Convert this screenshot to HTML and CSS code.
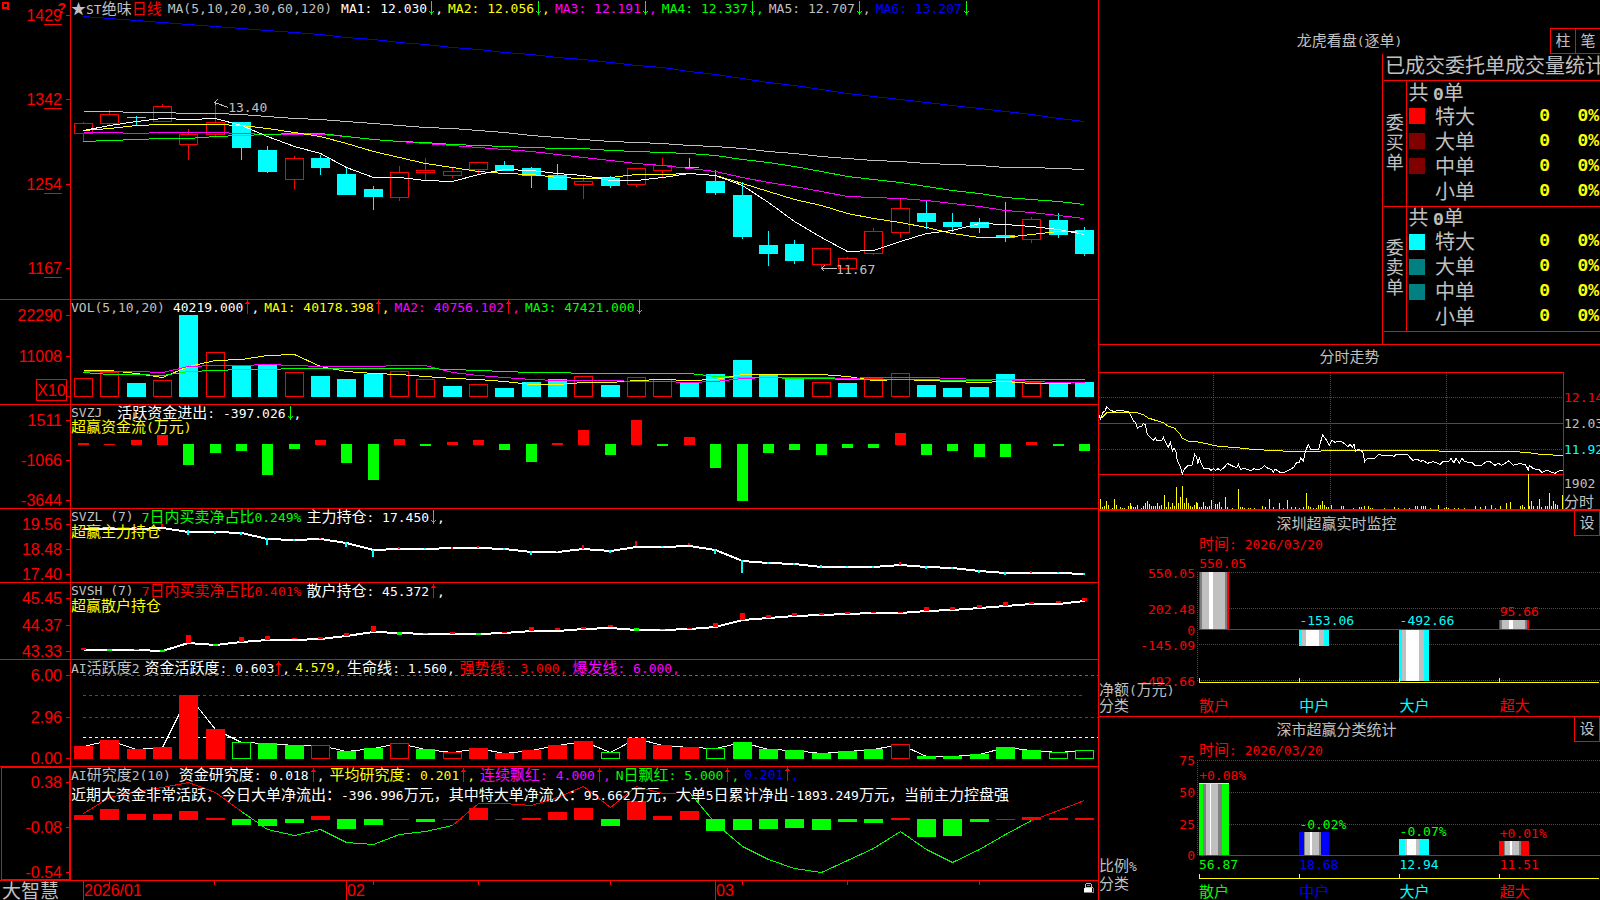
FILE: index.html
```html
<!DOCTYPE html>
<html lang="zh-CN">
<head>
<meta charset="utf-8">
<title>ST绝味 日线 - 大智慧</title>
<link rel="stylesheet" href="styles.css">
</head>
<body>
<svg class="defs" aria-hidden="true">
  <symbol id="down" viewBox="0 0 5 14"><path d="M2 0h1v14h-1zM0 10h1v1h3v-1h1v1h-1v1h-3v-1h-1zM1 11h3v1h-3z"/></symbol>
  <symbol id="up" viewBox="0 0 5 14"><path d="M2 0h1v14h-1zM1 2h3v1h-3zM0 3h5v1h-5z"/></symbol>
</svg>
<div class="app">
<main class="charts">
  <section class="panel price">
    <div class="axis">
      <svg class="corner" viewBox="0 0 8 8"><path d="M0 0h7v7h1v1h-3v-1h-5zM2 2v3h3v-3z" fill-rule="evenodd"/></svg>
      <b class="help">?</b>
      <span class="label">14<u>29</u></span><span class="label">13<u>42</u></span><span class="label">12<u>54</u></span><span class="label">11<u>67</u></span>
    </div>
    <div class="plot">
      <svg class="canvas" id="price" preserveAspectRatio="none"></svg>
      <div class="legend">
        <span class="title gray"><span class="z">★</span>ST<span class="z">绝味<span class="red">日线</span></span></span>
        <span class="params gray">MA(5,10,20,30,60,120)</span>
        <span class="white">MA1: 12.030<svg class="arrow dn"><use href="#down"/></svg>,</span>
        <span class="yellow">MA2: 12.056<svg class="arrow dn"><use href="#down"/></svg>,</span>
        <span class="magenta">MA3: 12.191<svg class="arrow dn"><use href="#down"/></svg>,</span>
        <span class="green">MA4: 12.337<svg class="arrow dn"><use href="#down"/></svg>,</span>
        <span class="gray">MA5: 12.707<svg class="arrow dn"><use href="#down"/></svg>,</span>
        <span class="blue">MA6: 13.207<svg class="arrow dn"><use href="#down"/></svg></span>
      </div>
      <span class="note high">13.40</span>
      <span class="note low">11.67</span>
    </div>
  </section>

  <section class="panel">
    <div class="axis">
      <span class="label">22290</span><span class="label">11008</span><span class="label"><span class="scale">X10</span></span>
    </div>
    <div class="plot">
      <svg class="canvas" id="volume" preserveAspectRatio="none"></svg>
      <div class="legend">
        <span class="params gray">VOL(5,10,20)</span>
        <span class="white">40219.000<svg class="arrow"><use href="#up"/></svg>,</span>
        <span class="yellow">MA1: 40178.398<svg class="arrow"><use href="#up"/></svg>,</span>
        <span class="magenta">MA2: 40756.102<svg class="arrow"><use href="#up"/></svg>,</span>
        <span class="green">MA3: 47421.000<svg class="arrow dn"><use href="#down"/></svg></span>
      </div>
    </div>
  </section>

  <section class="panel">
    <div class="axis">
      <span class="label">1511</span><span class="label">-1066</span><span class="label">-3644</span>
    </div>
    <div class="plot">
      <svg class="canvas" id="flow" preserveAspectRatio="none"></svg>
      <div class="legend">
        <span class="params wide gray">SVZJ</span>
        <span class="white"><span class="z">活跃资金进出</span>: -397.026<svg class="arrow dn"><use href="#down"/></svg>,</span>
      </div>
      <div class="legend name"><span class="yellow"><span class="z">超赢资金流</span>(<span class="z">万元</span>)</span></div>
    </div>
  </section>

  <section class="panel">
    <div class="axis">
      <span class="label">19.56</span><span class="label">18.48</span><span class="label">17.40</span>
    </div>
    <div class="plot">
      <svg class="canvas" id="major" preserveAspectRatio="none"></svg>
      <div class="legend">
        <span class="params gray">SVZL (7)</span>
        <span class="green">7<span class="z">日内买卖净占比</span>0.249%</span>
        <span class="white"><span class="z">主力持仓</span>: 17.450<svg class="arrow dn"><use href="#down"/></svg>,</span>
      </div>
      <div class="legend name"><span class="yellow z">超赢主力持仓</span></div>
    </div>
  </section>

  <section class="panel">
    <div class="axis">
      <span class="label">45.45</span><span class="label">44.37</span><span class="label">43.33</span>
    </div>
    <div class="plot">
      <svg class="canvas" id="retail" preserveAspectRatio="none"></svg>
      <div class="legend">
        <span class="params gray">SVSH (7)</span>
        <span class="red">7<span class="z">日内买卖净占比</span>0.401%</span>
        <span class="white"><span class="z">散户持仓</span>: 45.372<svg class="arrow"><use href="#up"/></svg>,</span>
      </div>
      <div class="legend name"><span class="yellow z">超赢散户持仓</span></div>
    </div>
  </section>

  <section class="panel">
    <div class="axis">
      <span class="label">6.00</span><span class="label">2.96</span><span class="label">0.00</span>
    </div>
    <div class="plot">
      <svg class="canvas" id="active" preserveAspectRatio="none"></svg>
      <div class="legend">
        <span class="gray">AI<span class="z">活跃度</span>2</span>
        <span class="white"><span class="z">资金活跃度</span>: 0.603<svg class="arrow"><use href="#up"/></svg>,</span>
        <span class="yellow">4.579,</span>
        <span class="white"><span class="z">生命线</span>: 1.560,</span>
        <span class="red"><span class="z">强势线</span>: 3.000,</span>
        <span class="magenta"><span class="z">爆发线</span>: 6.000,</span>
      </div>
    </div>
  </section>

  <section class="panel selected">
    <div class="axis">
      <span class="label">0.38</span><span class="label">-0.08</span><span class="label">-0.54</span>
    </div>
    <div class="plot">
      <svg class="canvas" id="research" preserveAspectRatio="none"></svg>
      <div class="legend">
        <span class="params gray">AI<span class="z">研究度</span>2(10)</span>
        <span class="white"><span class="z">资金研究度</span>: 0.018<svg class="arrow"><use href="#up"/></svg>,</span>
        <span class="yellow"><span class="z">平均研究度</span>: 0.201<svg class="arrow"><use href="#up"/></svg>,</span>
        <span class="magenta"><span class="z">连续飘红</span>: 4.000<svg class="arrow"><use href="#up"/></svg>,</span>
        <span class="green">N<span class="z">日飘红</span>: 5.000<svg class="arrow"><use href="#up"/></svg>,</span>
        <span class="blue">0.201<svg class="arrow"><use href="#up"/></svg>,</span>
      </div>
      <p class="legend summary white"><span><span class="z">近期大资金非常活跃，今日大单净流出：</span>-396.996<span class="z">万元，其中特大单净流入：</span>95.662<span class="z">万元，大单</span>5<span class="z">日累计净出</span>-1893.249<span class="z">万元，当前主力控盘强</span></span></p>
    </div>
  </section>

  <footer class="timeline">
    <strong class="brand">大智慧</strong>
    <div class="months">
      <svg class="canvas" id="ticks" preserveAspectRatio="none"></svg>
      <span class="month">2026/01</span><span class="month">02</span><span class="month">03</span>
      <svg class="lock" viewBox="0 0 11 12"><path d="M2 1h5v1h1v3h-1v-3h-5v3h-1v-3h1z" fill="#c0c0c0"/><path d="M3 3h3v1h-3z" fill="#808080"/><path d="M1 5h8v1h-8z" fill="#c0c0c0"/><path d="M0 6h8v4h-8z" fill="#fff"/><path d="M9 6h1v5h-10v-1h9z" fill="#808080"/></svg>
    </div>
  </footer>
</main>

<aside class="side">
  <section class="orders">
    <div class="orders-head">
      <h2><span class="z">龙虎看盘</span>(<span class="z">逐单</span>)</h2>
      <div class="modes"><button type="button">柱</button><button type="button">笔</button></div>
    </div>
    <div class="orders-body">
      <table class="stats">
        <caption>已成交委托单成交量统计</caption>
        <colgroup><col class="c-kind"><col class="c-key"><col class="c-label"><col class="c-count"><col></colgroup>
        <tbody>
          <tr><th class="kind" rowspan="5">委<br>买<br>单</th><td class="total" colspan="4">共 <b>0</b>单</td></tr>
          <tr><td class="key"><i class="swatch s-red"></i></td><th>特大</th><td class="num">0</td><td class="num">0%</td></tr>
          <tr><td class="key"><i class="swatch s-maroon"></i></td><th>大单</th><td class="num">0</td><td class="num">0%</td></tr>
          <tr><td class="key"><i class="swatch s-maroon"></i></td><th>中单</th><td class="num">0</td><td class="num">0%</td></tr>
          <tr><td class="key"></td><th>小单</th><td class="num">0</td><td class="num">0%</td></tr>
        </tbody>
        <tbody>
          <tr><th class="kind" rowspan="5">委<br>卖<br>单</th><td class="total" colspan="4">共 <b>0</b>单</td></tr>
          <tr><td class="key"><i class="swatch s-cyan"></i></td><th>特大</th><td class="num">0</td><td class="num">0%</td></tr>
          <tr><td class="key"><i class="swatch s-teal"></i></td><th>大单</th><td class="num">0</td><td class="num">0%</td></tr>
          <tr><td class="key"><i class="swatch s-teal"></i></td><th>中单</th><td class="num">0</td><td class="num">0%</td></tr>
          <tr><td class="key"></td><th>小单</th><td class="num">0</td><td class="num">0%</td></tr>
        </tbody>
      </table>
    </div>
  </section>

  <section class="intraday">
    <h2 class="z">分时走势</h2>
    <div class="intraday-body">
      <div class="intraday-plot"><svg class="canvas" id="intraday" preserveAspectRatio="none"></svg></div>
      <div class="intraday-axis">
        <span class="red">12.14</span><span>12.03</span><span class="cyan">11.92</span><span class="count">1902</span><span class="z">分时</span>
      </div>
    </div>
  </section>

  <section class="monitor net">
    <div class="monitor-head"><h2 class="z">深圳超赢实时监控</h2><button type="button">设</button></div>
    <p class="time red"><span class="z">时间</span>: 2026/03/20</p>
    <div class="bars">
      <span class="tick y1">550.05</span><span class="tick y2">202.48</span><span class="tick y3">0</span><span class="tick y4">-145.09</span><span class="tick y5">-492.66</span>
      <svg class="canvas" id="net" preserveAspectRatio="none"></svg>
      <span class="value v1 red">550.05</span><span class="value v2 cyan">-153.06</span><span class="value v3 cyan">-492.66</span><span class="value v4 red">95.66</span>
      <span class="unit"><span class="z">净额</span>(<span class="z">万元</span>)</span>
    </div>
    <div class="groups z"><span>分类</span><span class="red">散户</span><span class="cyan">中户</span><span class="cyan">大户</span><span class="red">超大</span></div>
  </section>

  <section class="monitor share">
    <div class="monitor-head"><h2 class="z">深市超赢分类统计</h2><button type="button">设</button></div>
    <p class="time red"><span class="z">时间</span>: 2026/03/20</p>
    <div class="bars">
      <span class="tick y1">75</span><span class="tick y2">50</span><span class="tick y3">25</span><span class="tick y4">0</span>
      <svg class="canvas" id="share" preserveAspectRatio="none"></svg>
      <span class="value v1 red">+0.08%</span><span class="value v2 green">-0.02%</span><span class="value v3 green">-0.07%</span><span class="value v4 red">+0.01%</span>
    </div>
    <div class="groups ratio"><span><span class="z">比例</span>%</span><span class="green">56.87</span><span class="blue">18.68</span><span class="cyan">12.94</span><span class="red">11.51</span></div>
    <div class="groups z"><span class="raised">分类</span><span class="green">散户</span><span class="blue">中户</span><span class="cyan">大户</span><span class="red">超大</span></div>
  </section>
</aside>
</div>
<script src="charts.js"></script>
</body>
</html>
```
FILE: styles.css
```css
* { box-sizing: border-box; }

body {
  margin: 0;
  background: #000;
  color: #c0c0c0;
  font: 13px/15px "DejaVu Sans Mono", "Noto Sans CJK SC", monospace;
  overflow: hidden;
}

h2, p { margin: 0; font-weight: 400; }
h2 { font-size: 13px; }
.z { font-family: "Noto Sans CJK SC", sans-serif; font-size: 15px; line-height: 15px; }
.defs { display: none; }

.red { color: #f00; }
.green { color: #0f0; }
.blue { color: #00f; }
.cyan { color: #0ff; }
.yellow { color: #ff0; }
.magenta { color: #f0f; }
.white { color: #fff; }
.gray { color: #c0c0c0; }

button {
  background: #000;
  border: 1px solid #f00;
  color: #c0c0c0;
  font: 15px/20px "Noto Sans CJK SC", sans-serif;
  padding: 0 0 2px;
  width: 26px;
  height: 26px;
}

.app { display: flex; height: 100vh; min-height: 700px; }

/* Left: stacked indicator panels */
.charts {
  flex: 1;
  min-width: 0;
  border-right: 1px solid #f00;
  display: grid;
  grid-template-rows: 300fr 105fr 104fr 74fr 77fr 107fr 114fr 19fr;
}
.panel { display: flex; min-height: 0; border-bottom: 1px solid #f00; }
.axis {
  position: relative;
  width: 71px;
  flex: none;
  border-right: 1px solid #f00;
  padding: 7px 8px 0 0;
  display: flex;
  flex-direction: column;
  justify-content: space-between;
  align-items: flex-end;
  color: #f00;
  font: 16px/17px "Liberation Sans", sans-serif;
}
.label { position: relative; height: 16px; }
.label::after {
  content: "";
  position: absolute;
  right: -8px;
  top: 8px;
  width: 4px;
  height: 1px;
  background: #f00;
}
.label u { display: inline-block; height: 18px; text-decoration: none; border-bottom: 1px solid #f00; }
.price .axis { padding-bottom: 23px; }
.corner { position: absolute; left: 2px; top: 2px; width: 8px; height: 8px; fill: #f00; }
.help { position: absolute; right: 4px; top: 0; font-size: 14px; }
.scale {
  position: absolute;
  right: -5px;
  bottom: 3px;
  width: 31px;
  height: 22px;
  line-height: 21px;
  text-align: center;
  border: 1px solid #f00;
}
.selected .axis::before { content: ""; position: absolute; left: 1px; top: 0; right: 0; bottom: 0; border: 1px solid #f00; }

.plot { position: relative; flex: 1; min-width: 0; }
.canvas { position: absolute; left: 0; top: 0; width: 100%; height: 100%; shape-rendering: crispEdges; }
.legend { position: relative; display: flex; align-items: center; gap: 5px; height: 15px; white-space: nowrap; }
.price .legend { height: 17px; }
.params { margin-right: 3px; }
.price .params { margin-right: 4px; }
.title { margin-right: 1px; }
.wide { margin-right: 10px; }
.name { margin-top: -1px; }
.summary { margin-top: 4px; height: 17px; }
.arrow { width: 5px; height: 14px; margin: 0 1px 0 2px; vertical-align: -2px; fill: #f00; shape-rendering: crispEdges; }
.arrow.dn { fill: #0f0; }
.note { position: absolute; }
.high { left: 15.3%; top: 33.5%; }
.low { left: 74.5%; top: 87.5%; }

.timeline { display: flex; }
.brand { width: 83px; flex: none; padding-left: 2px; font: 400 19px/17px "Noto Sans CJK SC", sans-serif; }
.months { position: relative; flex: 1; display: grid; grid-template-columns: 263fr 369fr 383fr; }
.month { border-left: 1px solid #f00; color: #f00; font: 16px/19px "Liberation Sans", sans-serif; }
.lock { position: absolute; right: 3px; top: 1px; width: 11px; height: 12px; shape-rendering: crispEdges; }

/* Right: order statistics and monitors */
.side {
  width: 501px;
  flex: none;
  overflow: hidden;
  display: grid;
  grid-template-rows: 345fr 166fr 206fr 183fr;
}
.side > section { min-height: 0; min-width: 0; position: relative; }

.orders { border-bottom: 1px solid #f00; display: flex; flex-direction: column; }
.orders-head { position: relative; height: 54px; padding-top: 32px; text-align: center; }
.modes { position: absolute; right: -1px; top: 28px; display: flex; }
.modes button + button { margin-left: -1px; }
.orders-body { flex: 1; margin-left: 283px; border-left: 1px solid #f00; padding-left: 1px; overflow: hidden; }
.stats {
  width: 222px;
  table-layout: fixed;
  border-collapse: collapse;
  font: 20px/24px "Noto Sans CJK SC", sans-serif;
}
.c-kind { width: 22px; }
.c-key { width: 29px; }
.c-label { width: 38px; }
.c-count { width: 77px; }
.stats caption { height: 26px; line-height: 22px; text-align: left; white-space: nowrap; padding-left: 1px; }
.stats tbody { border-top: 1px solid #f00; border-bottom: 1px solid #f00; }
.stats tr { height: 25px; }
.stats td, .stats th { padding: 0 0 5px; font-weight: 400; text-align: left; line-height: 20px; white-space: nowrap; }
.stats .kind { border-right: 1px solid #f00; font-size: 18px; text-align: center; }
.stats .total { padding: 0 0 3px 2px; }
.stats .total b { font: 700 18px/1px "Liberation Mono", monospace; }
.stats .key { padding: 0 0 4px 2px; }
.swatch { display: block; width: 16px; height: 16px; }
.s-red { background: #f00; }
.s-maroon { background: #800000; }
.s-cyan { background: #0ff; }
.s-teal { background: #008080; }
.stats .num { color: #ff0; text-align: right; font: 700 18px/20px "Liberation Mono", monospace; }
.stats .num:last-child { padding-right: 7px; }

.intraday { display: flex; flex-direction: column; border-bottom: 2px solid #f00; }
.intraday h2 { height: 27px; padding-top: 3px; text-align: center; }
.intraday-body { flex: 1; display: flex; min-height: 0; }
.intraday-plot { position: relative; flex: 1; border: solid #f00; border-width: 1px 1px 0 0; }
.intraday-axis { width: 36px; padding: 18px 0 0; display: flex; flex-direction: column; gap: 11px; overflow: hidden; }
.intraday-axis .count { margin: 8px 0 -9px; }

.monitor { display: flex; flex-direction: column; border-bottom: 1px solid #f00; }
.share { border-bottom: 0; }
.monitor-head { display: flex; flex: none; height: 24px; }
.monitor-head h2 { flex: 1; text-align: center; padding-top: 4px; }
.monitor-head button { flex: none; margin-top: -1px; }
.time { flex: none; padding-left: 100px; height: 16px; }
.bars { position: relative; flex: 1; }
.tick { position: absolute; left: 0; width: 96px; text-align: right; color: #f00; }
.value { position: absolute; }
.v1 { left: 20%; }
.v2 { left: 40%; }
.v3 { left: 60%; }
.v4 { left: 80%; }
.net .time { height: 17px; }
.net .bars { flex: none; height: 146px; }
.net .y1 { top: 14px; }
.net .y2 { top: 50px; }
.net .y3 { top: 71px; }
.net .y4 { top: 86px; }
.net .y5 { top: 122px; }
.net .v1 { top: 4px; }
.net .v2, .net .v3 { top: 61px; }
.net .v4 { top: 52px; }
.unit { position: absolute; left: 0; top: 129px; }
.groups { display: grid; flex: none; grid-template-columns: 100px repeat(4, 1fr); height: 18px; }
.net .groups { margin-top: -1px; }
.share .bars { flex: none; height: 100px; }
.share .y1 { top: -4px; }
.share .y2 { top: 28px; }
.share .y3 { top: 60px; }
.share .y4 { top: 91px; }
.share .v1 { top: 11px; }
.share .v2 { top: 60px; }
.share .v3 { top: 67px; }
.share .v4 { top: 69px; }
.share .ratio { height: 26px; }
.share .raised { margin-top: -8px; }
```
FILE: charts.js
```js
const NS = 'http://www.w3.org/2000/svg';
const R = '#f00', G = '#0f0', C = '#0ff', Y = '#ff0', M = '#f0f', W = '#fff', B = '#00f', S = '#c0c0c0', D = '#808080';

/* Vertical data is stored in steps of a third of a pixel. */
const STEP = 3;

function surface(id, width, height) {
  const svg = document.getElementById(id);
  svg.setAttribute('viewBox', `0 0 ${width} ${height}`);
  return svg;
}
function add(svg, tag, attrs) {
  const node = document.createElementNS(NS, tag);
  for (const key in attrs) node.setAttribute(key, attrs[key]);
  svg.appendChild(node);
}
const rect = (svg, x, y, width, height, fill) => add(svg, 'rect', { x, y, width, height, fill });
const frame = (svg, x, y, width, height, stroke) =>
  add(svg, 'rect', { x: x + 0.5, y: y + 0.5, width: width - 1, height: height - 1, fill: 'none', stroke });
const line = (svg, x1, y1, x2, y2, stroke, dash) =>
  add(svg, 'line', { x1, y1, x2, y2, stroke, 'stroke-dasharray': dash || 'none' });
const path = (svg, points, stroke, width) =>
  add(svg, 'polyline', { points: points.map(p => p.join()).join(' '), fill: 'none', stroke, 'stroke-width': width || 1 });

const center = i => Math.round(12 + 26.34 * i);
const row = (v, base) => Math.round((v - base) / STEP);
const series = (values, base, from = 0) =>
  values.map((v, i) => [center(i + from) + 0.5, Math.floor((v - base) / STEP) + 0.5]);
const parse = text => text.trim().split(/\s+/).map(t => [t[0], ...t.slice(1).split(',').map(Number)]);

/* Price: kind, open/close top, bottom, high, low */
{
  const svg = surface('price', 1027, 299);
  const candles = parse(`
    r369,402,366,424 r342,372,330,375 c351,354,348,375 r318,366,312,366 r402,435,387,480 r366,405,308,410
    c366,444,366,480 c450,516,438,519 r474,540,467,567 c474,504,465,525 c522,585,500,585 c567,591,558,630
    r516,594,498,603 r510,519,474,541 r513,528,503,534 r486,510,486,522 c495,513,483,513 c504,528,501,564
    c525,570,492,570 r543,555,527,597 c534,558,528,564 r504,555,504,561 r495,513,474,532 c501,504,474,505
    c543,579,510,585 c585,711,546,717 c735,762,693,798 c732,783,720,792 r744,795,744,805 r774,807,771,807
    r693,762,684,766 r624,699,597,714 c639,666,603,687 c666,681,639,696 c666,684,654,699 c705,714,606,726
    r657,720,651,729 c660,705,639,714 c690,762,681,768`);
  candles.forEach(([kind, top, bottom, high, low], i) => {
    const x = center(i), t = row(top, 0), b = row(bottom, 0), h = row(high, 0), l = row(low, 0);
    if (kind === 'c') {
      rect(svg, x, h, 1, l - h, C);
      rect(svg, x - 9, t, 19, b - t, C);
    } else {
      rect(svg, x, h, 1, t - h, R);
      rect(svg, x, b, 1, Math.max(0, l - b), R);
      frame(svg, x - 9, t, 19, b - t, R);
    }
  });
  const averages = [
    [B, [49,55,61,67,73,78,84,90,96,102,111,118,126,133,141,148,156,162,171,178,186,195,203,214,223,235,246,257,268,280,290,298,308,316,325,335,344,355,364]],
    [S, [334,334,337,337,339,341,344,349,355,359,364,370,376,381,386,391,398,405,412,418,424,428,431,435,439,445,453,460,469,475,481,485,489,493,497,501,503,506,508]],
    [M, [398,398,399,398,398,398,400,402,403,403,410,419,425,430,435,441,448,455,464,473,482,490,496,505,515,532,547,560,574,589,592,596,601,610,619,631,638,646,655]],
    [G, [424,421,418,415,414,409,405,403,401,401,409,417,424,428,433,436,439,441,444,446,450,454,457,460,467,477,487,499,513,528,538,547,559,570,580,591,598,604,613]],
    [Y, [391,385,377,373,373,373,376,385,397,408,430,454,472,490,502,514,519,523,532,535,532,523,523,520,527,551,575,598,617,640,655,667,682,700,712,712,703,695,694]],
    [W, [390,376,364,355,358,355,375,409,440,460,502,532,532,541,544,523,508,511,520,526,541,541,532,520,527,556,608,664,712,754,751,724,700,690,671,673,679,689,703]]
  ];
  averages.forEach(([color, values]) => path(svg, series(values, 0), color));
  path(svg, [[146.5, 99.5], [143.5, 102.5], [145.5, 105.5]], S);
  path(svg, [[143.5, 102.5], [157.5, 107.5]], S);
  path(svg, [[753.5, 265.5], [750.5, 268.5], [753.5, 271.5]], S);
  path(svg, [[750.5, 268.5], [765.5, 268.5]], S);
}

/* Volume */
{
  const svg = surface('volume', 1027, 104);
  parse(`r264 r246 c279 r270 c75 r186 c228 c225 r246 c258 c267 c252 r243 r267 c288 r282 c294 c276 c267 r258
    c285 r261 r267 c279 c252 c210 c253 c265 r276 c279 r264 r249 c285 c294 c291 c252 r276 c281 c276`)
    .forEach(([kind, top], i) => {
      const y = row(top, 30);
      (kind === 'c' ? rect : frame)(svg, center(i) - 9, y, 19, 97 - y, kind === 'c' ? C : R);
    });
  path(svg, series([241,241,249,262,230,212,208,197,193,229,244,250,254,259,265,269,274,283,282,277,277,271,268,271,267,254,253,253,253,259,270,268,271,275,277,273,280,280,278], 30), Y);
  path(svg, series([244,244,244,247,230,226,226,223,227,229,229,229,227,227,247,256,262,268,271,271,271,274,274,277,274,265,262,262,262,265,263,262,262,265,268,269,274,277,277], 30), M);
  path(svg, series([247,253,253,256,245,241,239,238,235,235,235,235,235,235,238,241,244,247,247,250,250,250,250,250,259,262,262,265,265,268,268,268,268,271,271,268,268,268,268], 30), G);
}

function signedBars(svg, text, base, zero, width) {
  parse(text).forEach(([kind, edge], i) => {
    const y = row(edge, base), x = center(i) - (width - 1) / 2;
    if (kind === 'r') rect(svg, x, y, width, zero + 1 - y, R);
    else rect(svg, x, zero, width, y - zero, G);
  });
}

/* Capital flow */
signedBars(surface('flow', 1027, 103), `r459 r462 r450 r435 g525 g489 g483 g555 g477 r450 g519 g570 r447 g468
  r456 r450 g480 g516 r459 r420 g495 r390 g468 r441 g534 g633 g489 g480 g495 g474 g474 r429 g495 g483 g501
  g501 r456 g468 g483`, 345, 39, 11);

function holding(svg, values, marks, base, width, down) {
  path(svg, series(values, base).map(([x, y]) => [x, y + 0.5]), W, 2);
  parse(marks).forEach(([kind, top, bottom], i) => {
    const y = row(top, base);
    rect(svg, center(i) - (width >> 1), y, width, Math.max(1, row(bottom, base) - y), kind === 'r' ? R : down);
  });
}

/* Main-force and retail holdings */
holding(surface('major', 1027, 73),
  [714,714,714,711,723,725,727,746,747,746,757,777,775,775,773,773,776,783,783,776,780,768,768,765,777,811,818,820,828,828,828,824,830,832,842,846,846,846,849],
  `r713,716 r713,716 r714,717 r702,711 c721,735 c724,732 c726,735 c745,765 c748,753 r743,747 c757,770 c779,801
   r771,777 c773,777 r771,777 r768,774 c773,779 c783,795 r783,786 r765,777 c780,789 r753,768 c768,771 r759,765
   c778,792 c811,849 c816,822 c819,825 c825,834 c828,831 c828,834 r816,825 c828,837 c831,837 c840,849 c846,855
   r843,849 c845,849 c849,855`, 657, 2, C);
holding(surface('retail', 1027, 76),
  [207,207,207,210,188,192,184,178,177,174,167,155,156,159,159,159,158,151,150,146,141,147,148,146,139,118,111,105,104,101,98,96,90,89,82,76,70,69,62],
  `r204,209 g207,212 r207,210 g209,215 r165,189 g192,198 r171,186 r168,179 r174,177 r171,177 r159,168 r138,156
   g156,165 g159,162 r156,161 g159,165 r156,159 r141,152 r144,150 r141,147 r135,141 g144,153 g147,150 r144,147
   r129,141 r99,120 r105,114 r99,107 r99,105 r96,101 r96,99 r96,99 r81,92 r81,90 r75,83 r66,77 r66,72 r63,69
   r54,63`, 9, 5, G);

/* Activity: capitals are outlined bars */
{
  const svg = surface('active', 1027, 106);
  const dash = '3 3';
  line(svg, 12, 15.5, 1027, 15.5, M, dash);
  [[0, 6, R], [6, 14, G], [14, 24, R], [24, 36, G], [36, 38, R]].forEach(([a, b, color]) =>
    line(svg, center(a), 35.5, center(b), 35.5, color, dash));
  line(svg, 12, 57.5, 1027, 57.5, R, dash);
  line(svg, 12, 77.5, 1027, 77.5, W, dash);
  const bars = parse(`r498 r480 r507 r501 r345 r447 G486 g489 g495 R495 g513 g504 R489 g507 R516 r504 r519 r510
    r495 r483 G516 r474 r495 r501 G504 g486 g507 g510 g519 g513 g507 R492 g528 g528 g522 g501 g510 G516 G510`);
  path(svg, series(bars.map(b => b[1]), 240), W);
  bars.forEach(([kind, top], i) => {
    const y = row(top, 240), color = kind.toLowerCase() === 'r' ? R : G;
    if (kind === 'R' || kind === 'G') {
      rect(svg, center(i) - 9, y + 1, 19, 98 - y, '#000');
      frame(svg, center(i) - 9, y, 19, 99 - y, color);
    } else rect(svg, center(i) - 9, y, 19, 99 - y, color);
  });
}

/* Research */
{
  const svg = surface('research', 1027, 113);
  const values = [700,652,634,622,607,637,693,748,766,748,787,793,763,754,737,670,670,676,652,618,682,619,640,637,730,798,838,865,877,841,804,754,808,847,808,763,720,690,661];
  [[0, 6, R], [6, 14, G], [14, 23, R], [23, 36, G], [36, 38, R]].forEach(([a, b, color]) =>
    path(svg, series(values.slice(a, b + 1), 561, a), color));
  signedBars(svg, `r705 r687 r702 r702 r693 r714 g735 g738 g729 r708 g747 g735 r717 g726 r717 r684 r717 r714
    r696 r684 g738 r663 r708 r693 g753 g750 g747 g744 g750 g726 g729 r714 g771 g768 g726 r717 r711 r714 r714`, 561, 52, 19);
}

/* Minor ticks on the time line */
{
  const svg = surface('ticks', 1015, 19);
  [26, 131, 290, 395, 527, 659, 764, 896].forEach(x => rect(svg, x, 0, 1, 4, R));
}

/* Intraday */
{
  const svg = surface('intraday', 464, 136);
  const px = x => (x - 27) / STEP, py = y => (y - 114) / STEP;
  const points = text => text.trim().split(/\s+/).map(p => p.split(',').map(Number)).map(([x, y]) => [px(x), py(y)]);
  line(svg, 0, 24.5, 464, 24.5, R, '1 1');
  line(svg, 0, 50.5, 464, 50.5, R);
  line(svg, 0, 76.5, 464, 76.5, R, '1 1');
  line(svg, 0, 101.5, 464, 101.5, R);
  [114.5, 231.5, 347.5].forEach(x => line(svg, x, 0, x, 136, R, '1 1'));
  points(`31,491 37,516 43,512 49,497 55,510 67,518 73,491 79,510 92,515 98,518 103,518 115,513 121,503 125,512
    131,515 137,517 142,510 155,518 161,512 166,503 172,497 178,507 184,512 190,512 196,512 202,504 208,512
    215,510 223,480 229,515 235,500 241,515 247,503 253,512 259,456 265,503 271,486 277,453 283,503 289,488
    295,503 301,512 307,515 313,510 319,500 323,503 328,515 334,515 340,500 346,512 352,515 358,513 364,494
    376,506 382,506 388,500 394,515 406,486 412,515 427,519 445,462 451,515 457,517 463,518 475,518 481,518
    493,518 517,512 526,515 538,491 550,517 568,503 580,518 592,494 604,515 616,515 628,518 640,515 649,474
    655,512 661,515 670,518 679,518 685,510 691,510 697,497 703,510 709,515 715,515 724,510 754,512 760,512
    790,518 808,515 814,516 823,512 835,512 841,518 847,518 883,518 913,515 925,518 943,518 958,518 976,512
    982,514 994,512 1000,512 1006,513 1021,518 1045,509 1063,518 1069,515 1075,518 1093,518 1105,518 1123,518
    1156,512 1171,515 1186,512 1204,509 1216,518 1231,512 1249,503 1261,500 1291,512 1297,510 1303,515 1315,417
    1318,512 1324,497 1330,512 1342,512 1348,491 1354,515 1366,512 1372,512 1378,474 1384,512 1390,498 1396,506
    1402,510 1417,480`).forEach(([x, y]) => rect(svg, Math.floor(x), Math.round(y), 1, 136 - Math.round(y), Y));
  path(svg, points(`27,247 38,246 52,232 140,233 160,239 175,249 200,257 222,264 235,274 255,280 262,290 270,297
    277,310 295,318 320,320 345,325 385,334 440,338 485,343 540,346 600,349 692,349 695,346 1042,346 1048,349
    1245,349 1310,352 1350,358 1385,359 1395,361 1420,361`), Y);
  path(svg, points(`27,240 32,253 38,233 45,228 50,216 60,225 75,231 80,226 100,226 105,231 116,228 122,240 130,258
    137,262 142,280 150,274 156,274 160,265 166,270 172,298 180,306 190,316 196,308 200,317 215,317 220,307
    228,325 235,336 241,323 248,348 252,338 258,352 262,378 270,392 277,416 283,402 295,391 306,391 314,358
    320,366 323,386 328,370 334,388 342,400 358,401 363,406 370,401 376,406 384,401 392,406 404,396 412,385
    425,392 440,398 445,388 452,404 462,400 470,403 482,407 492,401 500,405 515,400 523,391 532,399 545,404
    550,411 555,402 570,412 585,411 600,404 612,396 620,382 628,382 632,370 640,378 646,350 655,328 662,342
    686,342 692,320 698,300 706,310 718,330 726,316 735,322 752,318 762,325 774,336 780,328 788,336 792,328
    797,349 806,343 818,350 824,380 832,371 855,370 865,358 880,362 905,362 912,364 918,358 952,358 968,376
    980,372 992,379 1000,376 1012,385 1030,380 1050,388 1060,379 1078,378 1083,370 1092,384 1098,370 1108,384
    1116,370 1124,380 1148,384 1155,391 1175,391 1190,379 1200,380 1215,391 1225,385 1235,391 1256,378 1270,391
    1290,385 1307,390 1315,405 1318,391 1330,401 1348,404 1356,412 1370,405 1382,411 1395,415 1406,408 1420,406`), W);
}

/* Cylinder: stripes as [right edge, color] */
function cylinder(svg, x, y, height, stripes) {
  let left = 0;
  stripes.forEach(([right, color]) => {
    rect(svg, x + left, y, right - left, height, color);
    left = right;
  });
}
function baseline(svg, y) {
  rect(svg, 100, y, 400, 1, Y);
  [100, 200, 300, 400].forEach(x => rect(svg, x, y - 4, 1, 4, Y));
}

/* Net amount by group */
{
  const svg = surface('net', 501, 146);
  [20.5, 56.5, 92.5, 128.5].forEach(y => line(svg, 98, y, 501, y, R, '1 1'));
  line(svg, 98.5, 20, 98.5, 128, R, '1 1');
  const red = [[1, R], [3, D], [10, S], [14, W], [26, S], [28, D], [30, R]];
  const cyan = [[3, C], [7, S], [20, W], [25, S], [30, C]];
  cylinder(svg, 100, 20, 57, red);
  cylinder(svg, 200, 78, 16, cyan);
  cylinder(svg, 300, 78, 51, cyan);
  cylinder(svg, 400, 68, 9, red);
  rect(svg, 100, 77, 401, 1, R);
  baseline(svg, 130);
}

/* Share by group */
{
  const svg = surface('share', 501, 100);
  svg.style.overflow = 'visible';
  [3.5, 35.5, 67.5].forEach(y => line(svg, 98, y, 501, y, R, '1 1'));
  line(svg, 98.5, 3, 98.5, 98, R, '1 1');
  cylinder(svg, 100, 26, 72, [[4, G], [7, D], [11, S], [12, W], [19, S], [23, D], [30, G]]);
  rect(svg, 100, 26, 30, 1, Y);
  cylinder(svg, 200, 75, 23, [[5, B], [6, D], [11, S], [13, W], [20, S], [22, D], [30, B]]);
  cylinder(svg, 300, 82, 16, [[6, C], [8, S], [17, W], [20, S], [30, C]]);
  cylinder(svg, 400, 84, 14, [[5, R], [6, D], [11, S], [13, W], [20, S], [22, D], [30, R]]);
  rect(svg, 100, 98, 401, 1, R);
  baseline(svg, 121);
}
```
